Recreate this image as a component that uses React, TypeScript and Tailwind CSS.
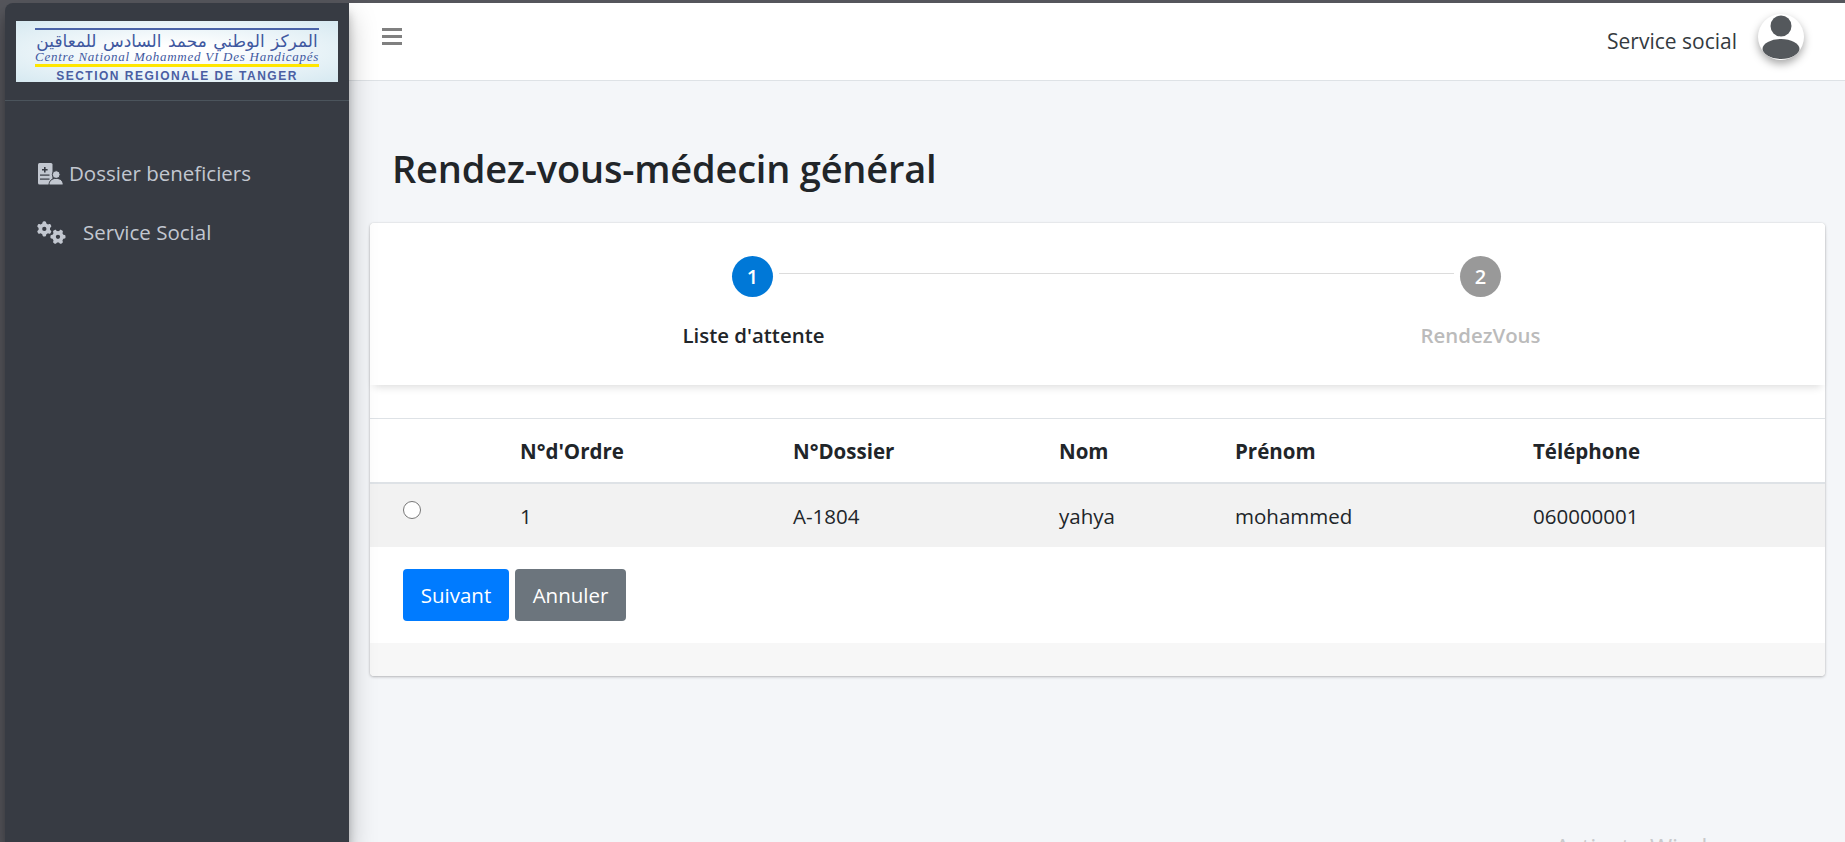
import React from "react";
import { FaGears } from "react-icons/fa6";

const font = "font-['Open_Sans','Noto_Sans',sans-serif]";

function Logo() {
  return (
    <div className="h-[61px] w-[322px] bg-[radial-gradient(ellipse_at_center,#ffffff_15%,#d6e9f1_100%)] px-[19px] pt-[7px] overflow-hidden">
      <div className="h-[2px] bg-[#4a63a8]" />
      <div dir="rtl" className="h-[20px] text-center font-['DejaVu_Sans',sans-serif] text-[17px] leading-[22px] [word-spacing:1px] text-[#3f58a0] whitespace-nowrap">
        المركز الوطني محمد السادس للمعاقين
      </div>
      <div className="h-[13px] text-center font-['Liberation_Serif',serif] italic text-[13px] leading-[13px] tracking-[0.75px] text-[#3f58a0] whitespace-nowrap">
        Centre National Mohammed VI Des Handicapés
      </div>
      <div className="mt-[1px] h-[3px] bg-[#ffe600]" />
      <div className="mt-[3px] text-center font-['Liberation_Sans',sans-serif] font-bold text-[12px] leading-[12px] tracking-[1.5px] text-[#4a5ea3] whitespace-nowrap">
        SECTION REGIONALE DE TANGER
      </div>
    </div>
  );
}

function DossierIcon() {
  return (
    <svg viewBox="0 0 26 22" className="h-[22px] w-[26px]">
      <rect x="1" y="0" width="14.5" height="21.5" rx="1.5" fill="#c2c7d0" />
      <path d="M7 4h1.6v2h2v1.6h-2v2H7v-2H5V6h2z" fill="#373b43" />
      <rect x="3" y="11.5" width="9.5" height="1.2" fill="#373b43" />
      <rect x="3" y="15.5" width="9.5" height="1.2" fill="#373b43" />
      <circle cx="19.2" cy="11.6" r="3.9" stroke="#373b43" strokeWidth="1" fill="#c2c7d0" />
      <path d="M12 22c0-4.2 2.8-6.6 7.2-6.6s7 2.4 7 6.6z" stroke="#373b43" strokeWidth="1" fill="#c2c7d0" />
    </svg>
  );
}

function Sidebar() {
  return (
    <aside className="relative z-10 w-[344px] shrink-0 rounded-tl-[8px] bg-[#373b43] shadow-[0_14px_28px_rgba(0,0,0,0.25),0_10px_10px_rgba(0,0,0,0.22)]">
      <div className="h-[98px] border-b border-[#4b545c] pl-[11px] pt-[18px]">
        <Logo />
      </div>
      <nav className="pt-[43px] pl-[32px] text-[#c2c7d0]">
        <div className="flex h-[59px] items-center">
          <DossierIcon />
          <span className="ml-[6px] text-[20.5px]">Dossier beneficiers</span>
        </div>
        <div className="flex h-[59px] items-center">
          <FaGears className="h-[23px] w-[29px]" />
          <span className="ml-[17px] text-[20.5px]">Service Social</span>
        </div>
      </nav>
    </aside>
  );
}

function Avatar() {
  return (
    <div className="h-[46px] w-[46px] overflow-hidden rounded-full bg-white shadow-[0_4px_8px_rgba(0,0,0,0.35)]">
      <svg viewBox="0 0 46 46" className="h-full w-full" fill="#54585c">
        <circle cx="23" cy="12" r="10.5" />
        <ellipse cx="23" cy="35" rx="18.5" ry="10" />
      </svg>
    </div>
  );
}

function MenuIcon() {
  return (
    <svg viewBox="0 0 20 18" className="ml-[33px] mt-[24px] h-[18px] w-[20px]" fill="#808080">
      <rect x="0" y="1" width="20" height="3" />
      <rect x="0" y="8" width="20" height="3" />
      <rect x="0" y="15" width="20" height="3" />
    </svg>
  );
}

function Header() {
  return (
    <header className="flex h-[78px] shrink-0 items-start justify-between border-b border-[#dee2e6] bg-white">
      <MenuIcon />
      <div className="mr-[41px] mt-[11px] flex items-center">
        <span className="mt-[10px] text-[21px] text-[#343a40]">Service social</span>
        <div className="ml-[21px]"><Avatar /></div>
      </div>
    </header>
  );
}

function Stepper() {
  return (
    <div className="h-[162px] overflow-hidden rounded-t-[4px] bg-white shadow-[0_6px_8px_-4px_rgba(0,0,0,0.14)]">
      <div className="flex items-start pl-[362px] pt-[33px]">
        <div className="flex h-[41px] w-[41px] shrink-0 items-center justify-center rounded-full bg-[#0078d7] text-[20px] font-semibold text-white">1</div>
        <div className="mx-[6px] mt-[17px] h-px w-[675px] shrink-0 bg-[#dcdcdc]" />
        <div className="flex h-[41px] w-[41px] shrink-0 items-center justify-center rounded-full bg-[#999999] text-[20px] font-semibold text-white">2</div>
      </div>
      <div className="mt-[23px] flex pl-[20px] text-[20.4px] font-semibold leading-[30px]">
        <div className="w-[727px] shrink-0 text-center text-[#212529]">Liste d'attente</div>
        <div className="w-[727px] shrink-0 text-center text-[#bbbbbb]">RendezVous</div>
      </div>
    </div>
  );
}

function DataTable() {
  return (
    <table className="w-full table-fixed border-collapse text-left text-[20.5px] text-[#212529]">
      <thead>
        <tr className="h-[64px] border-t border-b-2 border-[#dee2e6]">
          <th className="w-[150px]" />
          <th className="w-[273px] pt-[3px] font-bold">N°d'Ordre</th>
          <th className="w-[266px] pt-[3px] font-bold">N°Dossier</th>
          <th className="w-[176px] pt-[3px] font-bold">Nom</th>
          <th className="w-[298px] pt-[3px] font-bold">Prénom</th>
          <th className="pt-[3px] font-bold">Téléphone</th>
        </tr>
      </thead>
      <tbody>
        <tr className="h-[64px] bg-[#f2f2f2]">
          <td className="align-top pl-[33px] pt-[17px]">
            <input type="radio" name="patient" className="block h-[18px] w-[18px]" />
          </td>
          <td className="pt-[3px]">1</td>
          <td className="pt-[3px]">A-1804</td>
          <td className="pt-[3px]">yahya</td>
          <td className="pt-[3px]">mohammed</td>
          <td className="pt-[3px]">060000001</td>
        </tr>
      </tbody>
    </table>
  );
}

export default function App() {
  return (
    <div className={`relative h-[842px] w-[1845px] overflow-hidden bg-[#55565c] pl-[5px] pt-[3px] ${font}`}>
      <div className="flex h-[839px]">
        <Sidebar />
        <main className="flex min-w-0 flex-1 flex-col bg-[#f4f6f9]">
          <Header />
          <h1 className="ml-[43px] mt-[60px] h-[82px] text-[38px] font-semibold leading-[54px] tracking-[-0.2px] text-[#212529]">
            Rendez-vous-médecin général
          </h1>
          <section className="ml-[21px] mr-[20px] h-[453px] rounded-[4px] bg-white shadow-[0_0_1px_rgba(0,0,0,0.2),0_1px_3px_rgba(0,0,0,0.25)]">
            <Stepper />
            <div className="h-[33px]" />
            <DataTable />
            <div className="flex h-[96px] gap-[6px] pl-[33px] pt-[22px]">
              <button className="h-[52px] w-[106px] rounded-[4px] bg-[#007bff] pt-[1px] text-[20.5px] text-white">Suivant</button>
              <button className="h-[52px] w-[111px] rounded-[4px] bg-[#6c757d] pt-[1px] text-[20.5px] text-white">Annuler</button>
            </div>
            <div className="h-[33px] rounded-b-[4px] bg-[#f7f7f7]" />
          </section>
        </main>
      </div>
      <div className="absolute left-[1555px] top-[831px] text-[24px] leading-[32px] text-[#c9cacc]">Activate Windows</div>
    </div>
  );
}
